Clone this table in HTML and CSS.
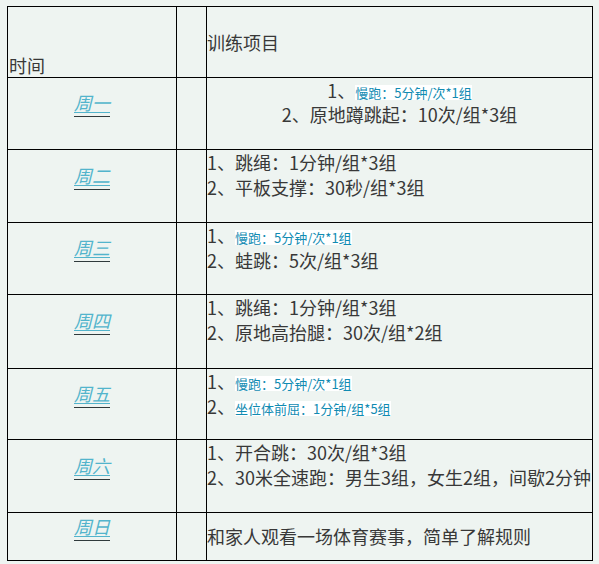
FILE: index.html
```html
<!DOCTYPE html>
<html lang="zh-CN">
<head>
<meta charset="utf-8">
<title>训练项目</title>
<link rel="stylesheet" href="styles.css">
</head>
<body>
<div class="plan">
  <div class="cell head-time">时间</div>
  <div class="cell"></div>
  <div class="cell head-items">训练项目</div>

  <div class="cell day"><span class="day-link"><span class="day-text">周一</span></span></div>
  <div class="cell"></div>
  <div class="cell items items-center">
    <p>1、<span class="hl">慢跑：5分钟/次*1组</span></p>
    <p>2、原地蹲跳起：10次/组*3组</p>
  </div>

  <div class="cell day"><span class="day-link"><span class="day-text">周二</span></span></div>
  <div class="cell"></div>
  <div class="cell items">
    <p>1、跳绳：1分钟/组*3组</p>
    <p>2、平板支撑：30秒/组*3组</p>
  </div>

  <div class="cell day"><span class="day-link"><span class="day-text">周三</span></span></div>
  <div class="cell"></div>
  <div class="cell items">
    <p>1、<span class="hl">慢跑：5分钟/次*1组</span></p>
    <p>2、蛙跳：5次/组*3组</p>
  </div>

  <div class="cell day"><span class="day-link"><span class="day-text">周四</span></span></div>
  <div class="cell"></div>
  <div class="cell items">
    <p>1、跳绳：1分钟/组*3组</p>
    <p>2、原地高抬腿：30次/组*2组</p>
  </div>

  <div class="cell day"><span class="day-link"><span class="day-text">周五</span></span></div>
  <div class="cell"></div>
  <div class="cell items">
    <p>1、<span class="hl">慢跑：5分钟/次*1组</span></p>
    <p>2、<span class="hl">坐位体前屈：1分钟/组*5组</span></p>
  </div>

  <div class="cell day"><span class="day-link"><span class="day-text">周六</span></span></div>
  <div class="cell"></div>
  <div class="cell items">
    <p>1、开合跳：30次/组*3组</p>
    <p>2、30米全速跑：男生3组，女生2组，间歇2分钟</p>
  </div>

  <div class="cell day"><span class="day-link"><span class="day-text">周日</span></span></div>
  <div class="cell"></div>
  <div class="cell items items-middle">
    <p>和家人观看一场体育赛事，简单了解规则</p>
  </div>
</div>
</body>
</html>
```

FILE: styles.css
```css
html, body {
  background: #eef4f1;
}
body {
  margin: 6px 0 0 7px;
  font-family: "Noto Sans CJK SC", "Noto Sans", sans-serif;
  font-size: 18px;
  color: #383838;
}
.plan {
  display: grid;
  width: 586px;
  box-sizing: border-box;
  grid-template-columns: 168px 29px 385px;
  grid-template-rows: 70px 71px 72px 71px 73px 70px 72px 47px;
  gap: 1px;
  padding: 1px;
  background: #000;
}
.cell {
  background: #eef4f1;
  min-width: 0;
}
.head-time {
  display: flex;
  align-items: flex-end;
  line-height: 24px;
  padding-left: 1px;
}
.head-items {
  display: flex;
  align-items: center;
  line-height: 24px;
}
.day {
  display: flex;
  flex-direction: column;
  align-items: center;
  justify-content: center;
}
.day::after {
  content: "";
  display: block;
  height: 21px;
}
.day-link {
  display: inline-block;
  padding-bottom: 1px;
  border-bottom: 1px solid #2f3a3c;
}
.day-text {
  display: inline-block;
  font-style: italic;
  font-size: 18px;
  line-height: 20px;
  color: #52b4cc;
  border-bottom: 1px solid #52b4cc;
}
.items {
  line-height: 25px;
  white-space: nowrap;
}
.items p {
  margin: 0;
}
.items-center {
  text-align: center;
  line-height: 24px;
  padding-top: 0;
}
.items-middle {
  display: flex;
  align-items: center;
}
.hl {
  display: inline-block;
  font-size: 13px;
  line-height: 15px;
  color: #118bb2;
  background: #fff;
}
```
